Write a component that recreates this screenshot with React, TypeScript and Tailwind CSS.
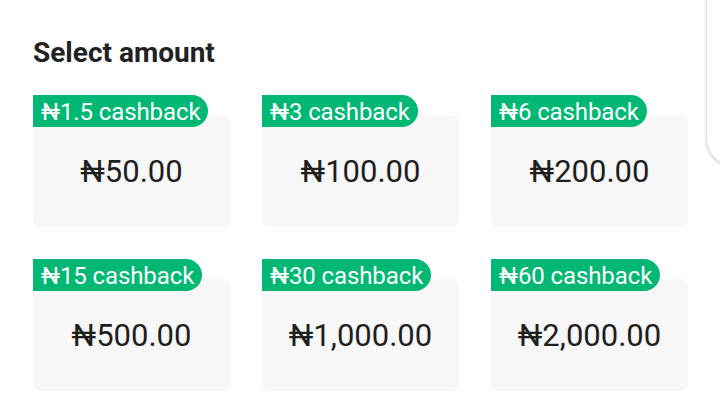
import React from 'react';

interface Option {
  amount: string;
  cashback: string;
}

const options: Option[] = [
  { amount: '₦50.00', cashback: '₦1.5 cashback' },
  { amount: '₦100.00', cashback: '₦3 cashback' },
  { amount: '₦200.00', cashback: '₦6 cashback' },
  { amount: '₦500.00', cashback: '₦15 cashback' },
  { amount: '₦1,000.00', cashback: '₦30 cashback' },
  { amount: '₦2,000.00', cashback: '₦60 cashback' },
];

const AmountCard: React.FC<{ option: Option }> = ({ option }) => (
  <div className="relative pt-[20px]">
    <div className="absolute left-0 top-0 h-[32px] rounded-tl-[10px] rounded-r-full bg-[#00b874] pl-[8px] pr-[8px] text-[24px] leading-[35px] tracking-[-0.1px] text-white">
      {option.cashback}
    </div>
    <div className="flex h-[112px] items-center justify-center rounded-[7px] bg-[#f7f7f7] pt-[2px] text-[31px] text-[#1f1f1f]">
      {option.amount}
    </div>
  </div>
);

export default function App() {
  return (
    <div
      className="relative h-[415px] w-[720px] overflow-hidden bg-white"
      style={{ fontFamily: 'Roboto, "Noto Sans", sans-serif' }}
    >
      <div className="absolute left-[707px] top-[-20px] h-[185px] w-[60px] rounded-bl-[26px] bg-white shadow-[-1px_1px_3px_rgba(0,0,0,0.18)]" />
      <div className="px-[33px] pt-[35px]">
        <h2 className="text-[28px] font-bold leading-[36px] text-[#222222]">Select amount</h2>
        <div className="mt-[24px] grid grid-cols-[197px_197px_197px] gap-x-[32px] gap-y-[32px]">
          {options.map((o) => (
            <AmountCard key={o.amount} option={o} />
          ))}
        </div>
      </div>
    </div>
  );
}
